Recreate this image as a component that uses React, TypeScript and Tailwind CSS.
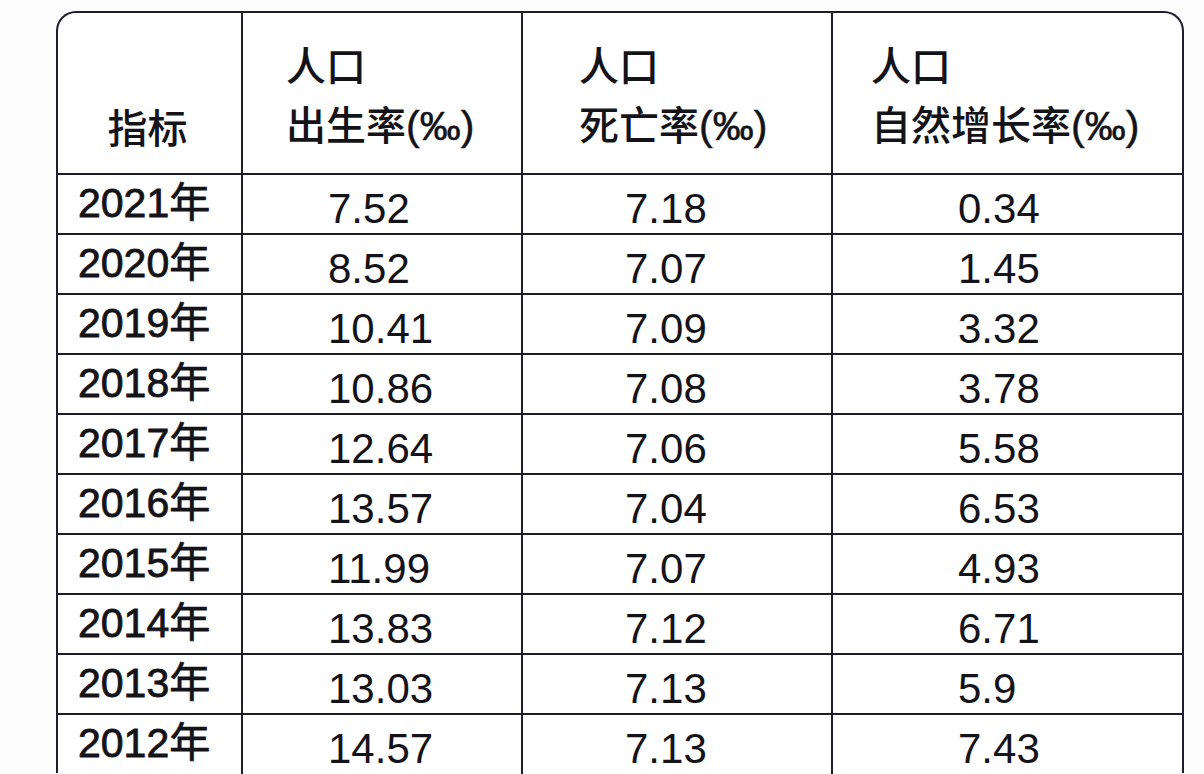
const ROWS: [string, string, string, string][] = [
  ['2021年', '7.52', '7.18', '0.34'],
  ['2020年', '8.52', '7.07', '1.45'],
  ['2019年', '10.41', '7.09', '3.32'],
  ['2018年', '10.86', '7.08', '3.78'],
  ['2017年', '12.64', '7.06', '5.58'],
  ['2016年', '13.57', '7.04', '6.53'],
  ['2015年', '11.99', '7.07', '4.93'],
  ['2014年', '13.83', '7.12', '6.71'],
  ['2013年', '13.03', '7.13', '5.9'],
  ['2012年', '14.57', '7.13', '7.43'],
];

const GRID = 'grid grid-cols-[183px_280px_310px_1fr]';
const CJK = "font-['Noto_Sans_CJK_SC','Noto_Sans',sans-serif]";
const NUM = "font-['Liberation_Sans','Noto_Sans_CJK_SC',sans-serif]";

function HeaderCell({ label, pad }: { label: string; pad: string }) {
  return (
    <div className={`border-l-2 border-[#1d1d2b] pt-[22px] pb-[17px] ${pad}`}>
      <div className="leading-[59px]">人口</div>
      <div className="leading-[59px] whitespace-nowrap">
        {label}
        <span className={`${NUM} font-normal text-[41px] [-webkit-text-stroke:0.5px_#131318]`}>(‰)</span>
      </div>
    </div>
  );
}

export default function App() {
  return (
    <div className="min-h-screen w-full bg-[#fdfdfe] overflow-hidden">
      <div className="h-[11px]" />
      <div className="ml-[56px] w-[1128px] border-2 border-b-0 border-[#1d1d2b] rounded-t-[20px] bg-white text-[#131318]">
        <div className={`${GRID} ${CJK} text-[40px] font-medium`}>
          <div className="flex items-end justify-center pb-[17px] pr-[4px]">
            <span className="leading-[59px]">指标</span>
          </div>
          <HeaderCell label="出生率" pad="pl-[43px]" />
          <HeaderCell label="死亡率" pad="pl-[56px]" />
          <HeaderCell label="自然增长率" pad="pl-[38px]" />
        </div>
        {ROWS.map(([year, birth, death, growth]) => (
          <div key={year} className={`${GRID} border-t-2 border-[#1d1d2b] h-[60px]`}>
            <div
              className={`${NUM} text-[41px] leading-[56px] pl-[20px] whitespace-nowrap [-webkit-text-stroke:0.8px_#131318]`}
            >
              {year}
            </div>
            <div className={`${NUM} border-l-2 border-[#1d1d2b] text-[42px] leading-[67px] pl-[85px]`}>
              {birth}
            </div>
            <div className={`${NUM} border-l-2 border-[#1d1d2b] text-[42px] leading-[67px] pl-[102px]`}>
              {death}
            </div>
            <div className={`${NUM} border-l-2 border-[#1d1d2b] text-[42px] leading-[67px] pl-[125px]`}>
              {growth}
            </div>
          </div>
        ))}
      </div>
    </div>
  );
}
